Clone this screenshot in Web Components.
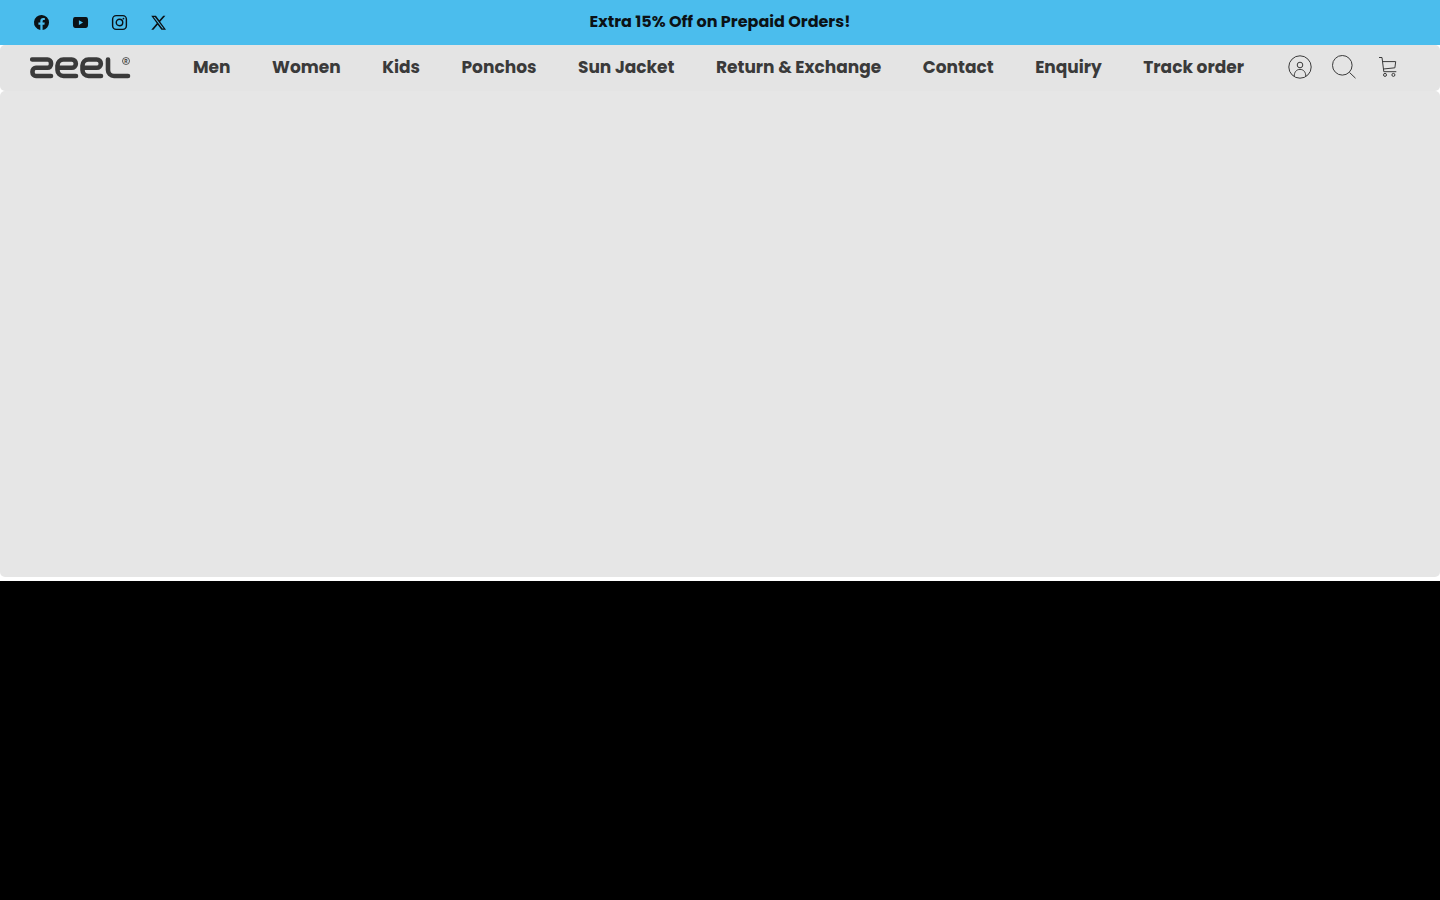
<!DOCTYPE html>
<html lang="en">
<head>
<meta charset="utf-8">
<meta name="viewport" content="width=device-width, initial-scale=1">
<title>Zeel</title>
<style>
  body {
    --announcement: #4bbded;
    --header: #e4e4e4;
    --placeholder: #e6e6e6;
    --text: #3a3a3a;
    --radius: 5px;
    margin: 0;
    background: #fff;
    color: var(--text);
    font-family: Poppins, Inter, sans-serif;
  }
</style>
</head>
<body>
<zeel-page>
  <zeel-announcement slot="top">Extra 15% Off on Prepaid Orders!</zeel-announcement>
  <zeel-header slot="header"></zeel-header>
  <zeel-hero></zeel-hero>
  <zeel-video></zeel-video>
</zeel-page>

<script>
class ZeelPage extends HTMLElement {
  connectedCallback() {
    this.attachShadow({mode: "open"});
    this.shadowRoot.innerHTML = `
    <style>
      :host {
        display: flex;
        flex-direction: column;
        min-height: 100vh;
      }

      main {
        display: flex;
        flex: 1;
        flex-direction: column;
        gap: 4px;
      }
    </style>
    <slot name="top"></slot>
    <slot name="header"></slot>
    <main><slot></slot></main>
    `;
  }
}

class ZeelAnnouncement extends HTMLElement {
  connectedCallback() {
    this.attachShadow({mode: "open"});
    this.shadowRoot.innerHTML = `
    <style>
      :host {
        display: grid;
        grid-template-columns: 1fr auto 1fr;
        align-items: center;
        padding: 10px 30px 11px;
        background: var(--announcement);
        color: #0b1216;
      }

      .social {
        display: flex;
        gap: 16px;
      }

      a {
        display: flex;
        padding: 2px;
        color: inherit;
      }

      svg {
        display: block;
        width: 19px;
        height: 19px;
      }

      p {
        margin: 0;
        font-size: 16px;
        font-weight: 700;
        line-height: 24px;
      }
    </style>
    <nav class="social" aria-label="Social">
      <a href="#" aria-label="Facebook">
        <svg viewBox="0 0 24 24" fill="currentColor"><path d="M21.500 12A9.500 9.500 0 1 0 10.500 21.400V14.800H8.100V12h2.400V9.900c0-2.400 1.400-3.700 3.600-3.700 1 0 2.100.2 2.100.2v2.300H15c-1.200 0-1.600.8-1.600 1.500V12h2.700l-.4 2.800h-2.300v6.600A9.500 9.500 0 0 0 21.500 12z"/></svg>
      </a>
      <a href="#" aria-label="YouTube">
        <svg viewBox="0 0 24 24" fill="currentColor" fill-rule="evenodd"><path d="M5 5.200Q12 4.600 19 5.200Q21.200 5.500 21.400 7.700Q21.800 12 21.400 16.300Q21.200 18.500 19 18.800Q12 19.400 5 18.800Q2.800 18.500 2.600 16.300Q2.200 12 2.600 7.700Q2.800 5.500 5 5.200zM10 9v6l5.200-3z"/></svg>
      </a>
      <a href="#" aria-label="Instagram">
        <svg viewBox="0 0 24 24" fill="none" stroke="currentColor" stroke-width="1.800"><rect x="3.300" y="3.300" width="17.400" height="17.400" rx="4.500"/><circle cx="12" cy="12" r="4.100"/><circle cx="17" cy="7" r="1.100" fill="currentColor" stroke="none"/></svg>
      </a>
      <a href="#" aria-label="X">
        <svg viewBox="0 0 24 24" fill="currentColor" fill-rule="evenodd"><path d="M18 3.500h2.700l-6.600 7.600 7.400 10h-5.800l-4.700-6.200-5.400 6.200H2.900l6.900-8.100-7-9.500h6l4.200 5.700zM17 19.500h1.500L7.400 5H5.800z"/></svg>
      </a>
    </nav>
    <p><slot></slot></p>
    `;
  }
}

class ZeelLogo extends HTMLElement {
  connectedCallback() {
    this.attachShadow({mode: "open"});
    this.shadowRoot.innerHTML = `
    <style>
      :host {
        display: block;
        padding-top: 2px;
      }

      svg {
        display: block;
        width: 101px;
        height: 22px;
      }

      text {
        font: 700 5px Inter, sans-serif;
      }
    </style>
    <svg viewBox="0 0 101 22" role="img" aria-label="Zeel">
      <g fill="none" stroke="currentColor" stroke-width="4.600" stroke-linecap="round">
        <path d="M2.200 2.500H17.500a3.500 3.500 0 0 1 3.500 3.500v1.300a3.500 3.500 0 0 1-3.500 3.500H6a3.500 3.500 0 0 0-3.500 3.500v1.200a3.500 3.500 0 0 0 3.500 3.500H21"/>
        <path id="e" d="M46 19H33.500a6 6 0 0 1-6-6V8.500a6 6 0 0 1 6-6h8.200a4.150 4.150 0 0 1 0 8.300H28"/>
        <use href="#e" x="25"/>
        <path d="M78 2.500V13a6 6 0 0 0 6 6h14"/>
      </g>
      <circle cx="96" cy="4" r="3.500" fill="none" stroke="currentColor" stroke-width=".8"/>
      <text x="96" y="6" text-anchor="middle" fill="currentColor">R</text>
    </svg>
    `;
  }
}

class ZeelHeader extends HTMLElement {
  connectedCallback() {
    this.attachShadow({mode: "open"});
    this.links = [
      "Men",
      "Women",
      "Kids",
      "Ponchos",
      "Sun Jacket",
      "Return & Exchange",
      "Contact",
      "Enquiry",
      "Track order"
    ];
    this.render();
  }

  render() {
    const links = this.links
      .map(link => `<a href="#">${link.replace("&", "&amp;")}</a>`)
      .join("");

    this.shadowRoot.innerHTML = `
    <style>
      :host {
        display: flex;
        align-items: center;
        padding: 0 40px 2px 30px;
        border-radius: var(--radius);
        background: var(--header);
      }

      a {
        color: inherit;
        text-decoration: none;
      }

      .menu {
        display: flex;
        flex: 1;
        justify-content: space-between;
        padding: 0 44px 0 62px;
        font-size: 17px;
        font-weight: 700;
        line-height: 44px;
        white-space: nowrap;
      }

      .tools {
        display: flex;
        gap: 20px;
      }

      button {
        display: block;
        padding: 0;
        border: 0;
        background: none;
        color: inherit;
        cursor: pointer;
      }

      .tools svg {
        display: block;
        width: 24px;
        height: 24px;
        fill: none;
        stroke: currentColor;
      }
    </style>
    <a href="#"><zeel-logo></zeel-logo></a>
    <nav class="menu" aria-label="Main">${links}</nav>
    <div class="tools">
      <a href="#" aria-label="Account">
        <svg viewBox="0 0 24 24"><circle cx="12" cy="12" r="11.200"/><circle cx="12" cy="10" r="2.800"/><path d="M6.200 21.400c0-4.300 2.200-7 5.800-7s5.800 2.700 5.800 7"/></svg>
      </a>
      <button type="button" aria-label="Search">
        <svg viewBox="0 0 24 24"><circle cx="10.300" cy="10.300" r="9.800"/><path d="M17.400 17.400l6.100 5.800"/></svg>
      </button>
      <a href="#" aria-label="Cart">
        <svg viewBox="0 0 24 24"><path d="M3 2.500h3l1.800 14.200h12.500M6.600 6.600h13.100l-.8 6.200-11.500 1.200"/><circle cx="9" cy="19.900" r="1.500"/><circle cx="17.400" cy="19.900" r="1.500"/></svg>
      </a>
    </div>
    `;
  }
}

class ZeelHero extends HTMLElement {
  connectedCallback() {
    this.attachShadow({mode: "open"});
    this.shadowRoot.innerHTML = `
    <style>
      :host {
        display: block;
        height: 54vh;
        border-radius: var(--radius);
        background: var(--placeholder);
      }
    </style>
    `;
  }
}

class ZeelVideo extends HTMLElement {
  connectedCallback() {
    this.attachShadow({mode: "open"});
    this.shadowRoot.innerHTML = `
    <style>
      :host {
        display: block;
        flex: 1;
        background: #000;
      }
    </style>
    `;
  }
}

customElements.define("zeel-page", ZeelPage);
customElements.define("zeel-announcement", ZeelAnnouncement);
customElements.define("zeel-logo", ZeelLogo);
customElements.define("zeel-header", ZeelHeader);
customElements.define("zeel-hero", ZeelHero);
customElements.define("zeel-video", ZeelVideo);
</script>
</body>
</html>
